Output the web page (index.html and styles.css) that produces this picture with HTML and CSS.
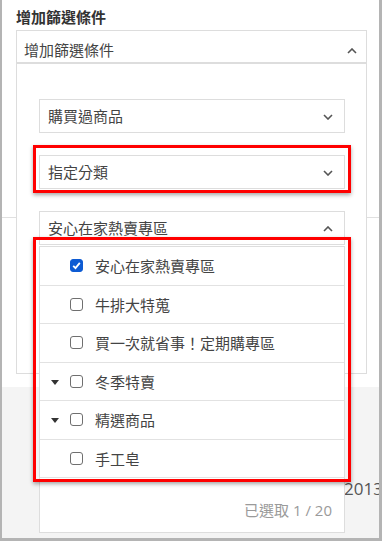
FILE: index.html
```html
<!doctype html>
<html lang="zh-Hant">
  <head>
    <meta charset="UTF-8" />
    <meta name="viewport" content="width=device-width, initial-scale=1.0" />
    <title>增加篩選條件</title>
    <link rel="stylesheet" href="styles.css">
  </head>
  <body>
    <div class="frame">
      <h3 class="field-title">增加篩選條件</h3>

      <div class="select-wrap">
        <div class="select select-main">
          <span>增加篩選條件</span>
          <svg class="chevron" width="10" height="6" viewBox="0 0 10 6"><path d="M1 5 L5 1 L9 5" /></svg>
        </div>

        <div class="filter-panel">
          <div class="select">
            <span>購買過商品</span>
            <svg class="chevron" width="10" height="6" viewBox="0 0 10 6"><path d="M1 1 L5 5 L9 1" /></svg>
          </div>

          <div class="select-wrap">
            <div class="select">
              <span>指定分類</span>
              <svg class="chevron" width="10" height="6" viewBox="0 0 10 6"><path d="M1 1 L5 5 L9 1" /></svg>
            </div>
            <span class="highlight highlight-select"></span>
          </div>

          <div class="select-wrap">
            <div class="select">
              <span>安心在家熱賣專區</span>
              <svg class="chevron" width="10" height="6" viewBox="0 0 10 6"><path d="M1 5 L5 1 L9 5" /></svg>
            </div>

            <div class="dropdown">
              <div class="options">
                <div class="option">
                  <span class="caret-space"></span>
                  <span class="checkbox checked">
                    <svg width="13" height="13" viewBox="0 0 13 13"><path d="M3.2 6.8 L5.5 9.1 L9.8 3.9" /></svg>
                  </span>
                  <span>安心在家熱賣專區</span>
                </div>
                <div class="option">
                  <span class="caret-space"></span>
                  <span class="checkbox"></span>
                  <span>牛排大特蒐</span>
                </div>
                <div class="option">
                  <span class="caret-space"></span>
                  <span class="checkbox"></span>
                  <span>買一次就省事！定期購專區</span>
                </div>
                <div class="option">
                  <span class="caret-space"><span class="caret"></span></span>
                  <span class="checkbox"></span>
                  <span>冬季特賣</span>
                </div>
                <div class="option">
                  <span class="caret-space"><span class="caret"></span></span>
                  <span class="checkbox"></span>
                  <span>精選商品</span>
                </div>
                <div class="option">
                  <span class="caret-space"></span>
                  <span class="checkbox"></span>
                  <span>手工皂</span>
                </div>
                <span class="highlight highlight-options"></span>
              </div>
              <div class="dropdown-footer">已選取 1 / 20</div>
            </div>
          </div>
        </div>
      </div>

      <!-- 背景頁面 -->
      <div class="page-row"></div>
      <div class="page-gap"></div>
      <div class="page-footer"><span>2013</span></div>
    </div>
  </body>
</html>
```

FILE: styles.css
```css
/* 通用樣式 */
* {
  box-sizing: border-box;
  margin: 0;
  padding: 0;
}

body {
  font-family: "Open Sans", "Noto Sans CJK TC", sans-serif;
  color: #444;
  background: #fff;
}

.frame {
  position: relative;
  width: 382px;
  height: 541px;
  overflow: hidden;
  border-left: 2px solid #b4b4b4;
  border-right: 3px solid #b4b4b4;
  border-bottom: 3px solid #b4b4b4;
  display: flex;
  flex-direction: column;
}

.field-title {
  font-size: 15px;
  font-weight: bold;
  line-height: 22px;
  color: #333;
  padding: 6px 0 0 14px;
  margin-bottom: 2px;
}

/* 下拉選單 */
.select-wrap {
  position: relative;
}

.select {
  display: flex;
  align-items: center;
  justify-content: space-between;
  height: 34px;
  border: 1px solid #ddd;
  padding: 0 11px 0 8px;
  font-size: 15px;
  line-height: 32px;
  background: #fff;
}

.select-main {
  margin: 0 12px 0 14px;
  height: 33px;
  padding: 7px 9px 0 7px;
  line-height: 24px;
}

.chevron {
  fill: none;
  stroke: #555;
  stroke-width: 1.6;
  margin-top: 2px;
}

.filter-panel {
  position: absolute;
  top: 100%;
  left: 14px;
  right: 12px;
  height: 311px;
  border: 1px solid #ddd;
  background: #fff;
  padding: 35px 21px 0 22px;
  display: flex;
  flex-direction: column;
  gap: 22px;
  z-index: 2;
}

.dropdown {
  position: absolute;
  top: calc(100% + 1px);
  left: 0;
  right: 0;
  border: 1px solid #ddd;
  background: #fff;
  z-index: 3;
}

.options {
  position: relative;
}

.option {
  display: flex;
  align-items: center;
  height: 38.5px;
  border-bottom: 1px solid #e2e2e2;
  font-size: 15px;
  color: #444;
  padding-left: 11px;
}

.caret-space {
  width: 19px;
  display: flex;
  align-items: center;
}

.caret {
  width: 0;
  height: 0;
  border-top: 5px solid #333;
  border-left: 4px solid transparent;
  border-right: 4px solid transparent;
  margin-top: 2px;
}

.checkbox {
  width: 13px;
  height: 13px;
  border: 1px solid #6f6f6f;
  border-radius: 3px;
  margin-right: 12px;
  display: flex;
}

.checkbox.checked {
  background: #0d5bd3;
  border-color: #0d5bd3;
}

.checkbox svg {
  margin: -1px;
  fill: none;
  stroke: #fff;
  stroke-width: 1.8;
}

.dropdown-footer {
  text-align: right;
  font-size: 15px;
  line-height: 22px;
  color: #9a9a9a;
  padding: 21px 12px 11px 0;
}

/* 標示紅框 */
.highlight {
  position: absolute;
  border: 3px solid #f00;
  box-shadow: 0 2px 4px rgba(0, 0, 0, 0.35);
  pointer-events: none;
  z-index: 4;
}

.highlight-select {
  top: -10px;
  left: -6px;
  right: -6px;
  bottom: -4px;
}

.highlight-options {
  top: -10px;
  left: -7px;
  right: -7px;
  bottom: -4px;
}

/* 背景頁面 */
.page-row {
  height: 155px;
  border-bottom: 1px solid #e0e0e0;
}

.page-gap {
  height: 169px;
}

.page-footer {
  flex: 1;
  background: #f4f4f4;
  padding: 91px 0 0 342px;
  font-size: 17px;
  line-height: 22px;
  color: #555;
  white-space: nowrap;
}
```
